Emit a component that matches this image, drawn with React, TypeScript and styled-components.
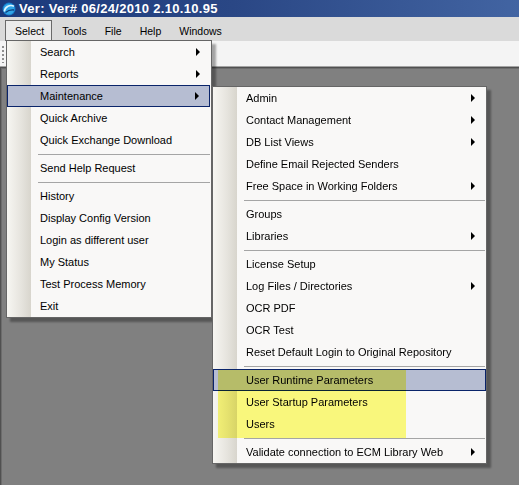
import React from "react";
import styled, { createGlobalStyle } from "styled-components";

const GlobalStyle = createGlobalStyle`
  html, body { margin: 0; padding: 0; background: #808080; }
  body { font-family: "Liberation Sans", Arial, sans-serif; font-size: 11px; color: #000; }
  * { box-sizing: border-box; }
`;

const Window = styled.div`
  position: relative;
  width: 519px;
  height: 485px;
  display: flex;
  flex-direction: column;
  overflow: hidden;
`;

const TitleBar = styled.div`
  height: 17px;
  flex: none;
  display: flex;
  align-items: center;
  gap: 3px;
  padding-left: 2px;
  background: linear-gradient(90deg, #1b3a7c 0%, #2a4785 45%, #4264a2 100%);
`;

const TitleText = styled.span`
  color: #fff;
  font-weight: bold;
  font-size: 13px;
  line-height: 17px;
  letter-spacing: 0.3px;
  white-space: nowrap;
`;

const MenuBar = styled.div`
  height: 24px;
  flex: none;
  display: flex;
  align-items: flex-end;
  padding-left: 5px;
  background: #dadada;
`;

const BarItem = styled.div<{ $open?: boolean }>`
  height: 21px;
  display: flex;
  align-items: center;
  padding: 0 7px 1px 9px;
  border: 1px solid ${(p) => (p.$open ? "#6a6a6a" : "transparent")};
  border-bottom: none;
  background: ${(p) => (p.$open ? "#ebebeb" : "transparent")};
  font-size: 10.5px;
  white-space: nowrap;
`;

const ToolBar = styled.div`
  height: 25px;
  flex: none;
  display: flex;
  align-items: center;
  padding-left: 2px;
  background: #f4f4f4;
`;

const Grip = styled.div`
  width: 2px;
  height: 18px;
  background-image: radial-gradient(circle, #8e8e8e 0.8px, transparent 1px);
  background-size: 2px 4px;
`;

const Workspace = styled.div`
  flex: 1;
  background: #808080;
  border-top: 1px solid #a3a3a3;
  box-shadow: inset 1px 1px 0 #505050, inset 2px 2px 0 #6c6c6c;
`;

const Menu = styled.div<{ $left: number; $top: number; $width: number }>`
  position: absolute;
  left: ${(p) => p.$left}px;
  top: ${(p) => p.$top}px;
  width: ${(p) => p.$width}px;
  display: flex;
  flex-direction: column;
  border: 1px solid #666;
  background: linear-gradient(90deg, #f7f6f2 0px, #e6e4de 14px, #d8d5cd 24px, #f9f8f7 24px);
  box-shadow: 4px 4px 2px rgba(0, 0, 0, 0.33);
  z-index: 2;
`;

const Item = styled.div<{ $active?: boolean; $inset?: number }>`
  height: 22px;
  display: flex;
  align-items: center;
  padding-left: 32px;
  padding-right: 10px;
  margin-right: ${(p) => p.$inset ?? 0}px;
  border: 1px solid ${(p) => (p.$active ? "#0a246a" : "transparent")};
  background: ${(p) => (p.$active ? "#b6bdd2" : "transparent")};
  white-space: nowrap;
`;

const Arrow = styled.span`
  margin-left: auto;
  width: 0;
  height: 0;
  border-left: 4px solid #000;
  border-top: 4px solid transparent;
  border-bottom: 4px solid transparent;
`;

const Separator = styled.div`
  height: 6px;
  display: flex;
  align-items: center;
  padding-left: 31px;
  padding-right: 1px;
  &::after {
    content: "";
    flex: 1;
    height: 1px;
    background: #a5a5a5;
  }
`;

const Highlight = styled.div`
  position: absolute;
  left: 5px;
  top: 283px;
  width: 188px;
  height: 68px;
  background: #fffe80;
  mix-blend-mode: multiply;
  pointer-events: none;
`;

type Entry = { label: string; sub?: boolean; active?: boolean } | "sep";

const selectMenu: Entry[] = [
  { label: "Search", sub: true },
  { label: "Reports", sub: true },
  { label: "Maintenance", sub: true, active: true },
  { label: "Quick Archive" },
  { label: "Quick Exchange Download" },
  "sep",
  { label: "Send Help Request" },
  "sep",
  { label: "History" },
  { label: "Display Config Version" },
  { label: "Login as different user" },
  { label: "My Status" },
  { label: "Test Process Memory" },
  { label: "Exit" },
];

const maintenanceMenu: Entry[] = [
  { label: "Admin", sub: true },
  { label: "Contact Management", sub: true },
  { label: "DB List Views", sub: true },
  { label: "Define Email Rejected Senders" },
  { label: "Free Space in Working Folders", sub: true },
  "sep",
  { label: "Groups" },
  { label: "Libraries", sub: true },
  "sep",
  { label: "License Setup" },
  { label: "Log Files / Directories", sub: true },
  { label: "OCR PDF" },
  { label: "OCR Test" },
  { label: "Reset Default Login to Original Repository" },
  "sep",
  { label: "User Runtime Parameters", active: true },
  { label: "User Startup Parameters" },
  { label: "Users" },
  "sep",
  { label: "Validate connection to ECM Library Web", sub: true },
];

const MenuEntries = ({ entries, inset }: { entries: Entry[]; inset?: number }) => (
  <>
    {entries.map((e, i) =>
      e === "sep" ? (
        <Separator key={i} />
      ) : (
        <Item key={i} $active={e.active} $inset={e.active ? inset : 0}>
          {e.label}
          {e.sub && <Arrow />}
        </Item>
      )
    )}
  </>
);

const Logo = () => (
  <svg width="14" height="14" viewBox="0 0 14 14">
    <circle cx="7" cy="7" r="6.5" fill="#1478c8" />
    <circle cx="7" cy="7" r="5.5" fill="#2fa3e6" />
    <path d="M2.2 9.5 C3 4.5 8 2.2 12 4.2" stroke="#d8f4ff" strokeWidth="1.6" fill="none" />
    <path d="M3.5 10.5 C6 8.5 9 7.5 12 8" stroke="#0b3d7a" strokeWidth="1.4" fill="none" />
  </svg>
);

export default function App() {
  return (
    <>
      <GlobalStyle />
      <Window>
        <TitleBar>
          <Logo />
          <TitleText>Ver: Ver# 06/24/2010 2.10.10.95</TitleText>
        </TitleBar>
        <MenuBar>
          <BarItem $open>Select</BarItem>
          <BarItem>Tools</BarItem>
          <BarItem>File</BarItem>
          <BarItem>Help</BarItem>
          <BarItem>Windows</BarItem>
        </MenuBar>
        <ToolBar>
          <Grip />
        </ToolBar>
        <Workspace />
        <Menu $left={6} $top={40} $width={206}>
          <MenuEntries entries={selectMenu} inset={1} />
        </Menu>
        <Menu $left={212} $top={86} $width={275}>
          <MenuEntries entries={maintenanceMenu} />
          <Highlight />
        </Menu>
      </Window>
    </>
  );
}
